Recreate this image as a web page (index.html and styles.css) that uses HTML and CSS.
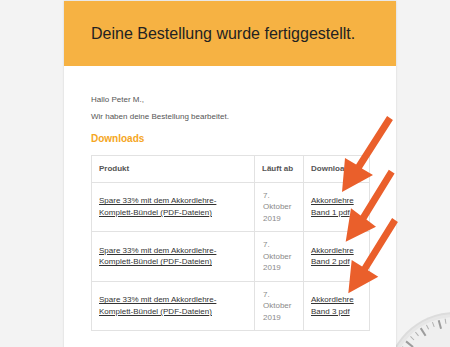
FILE: index.html
```html
<!DOCTYPE html>
<html lang="de">
<head>
<meta charset="utf-8">
<title>Bestellung</title>
<link rel="stylesheet" href="styles.css">
</head>
<body>
<svg class="clock" width="450" height="347" viewBox="0 0 450 347">
  <circle cx="455" cy="381" r="69" fill="#dcdcdc"/>
  <circle cx="455" cy="381" r="67" fill="#e6e6e6"/>
  <circle cx="455" cy="381" r="64" fill="#efefef"/>
  <g transform="translate(455,381)" stroke="#9c9c9c">
    <g stroke-width="2">
      <line x1="0" y1="-63" x2="0" y2="-54" transform="rotate(-15)"/>
      <line x1="0" y1="-63" x2="0" y2="-54" transform="rotate(-33)"/>
      <line x1="0" y1="-63" x2="0" y2="-54" transform="rotate(-51)"/>
      <line x1="0" y1="-63" x2="0" y2="-54" transform="rotate(-69)"/>
    </g>
    <g stroke-width="1" stroke="#b0b0b0">
      <line x1="0" y1="-63" x2="0" y2="-58" transform="rotate(-3)"/>
      <line x1="0" y1="-63" x2="0" y2="-58" transform="rotate(-9)"/>
      <line x1="0" y1="-63" x2="0" y2="-58" transform="rotate(-21)"/>
      <line x1="0" y1="-63" x2="0" y2="-58" transform="rotate(-27)"/>
      <line x1="0" y1="-63" x2="0" y2="-58" transform="rotate(-39)"/>
      <line x1="0" y1="-63" x2="0" y2="-58" transform="rotate(-45)"/>
      <line x1="0" y1="-63" x2="0" y2="-58" transform="rotate(-57)"/>
      <line x1="0" y1="-63" x2="0" y2="-58" transform="rotate(-63)"/>
    </g>
  </g>
</svg>

<div class="card">
  <div class="hero">
    <h1>Deine Bestellung wurde fertiggestellt.</h1>
  </div>
  <div class="content">
    <p class="text">Hallo Peter M.,</p>
    <p class="text second">Wir haben deine Bestellung bearbeitet.</p>
    <h2 class="section">Downloads</h2>
    <table class="downloads">
      <colgroup>
        <col class="c-prod">
        <col class="c-date">
        <col class="c-dl">
      </colgroup>
      <thead>
        <tr><th>Produkt</th><th>Läuft ab</th><th>Download</th></tr>
      </thead>
      <tbody>
        <tr>
          <td><a href="#">Spare 33% mit dem Akkordlehre-<br>Komplett-Bündel (PDF-Dateien)</a></td>
          <td class="date">7.<br>Oktober<br>2019</td>
          <td><a href="#">Akkordlehre<br>Band 1 pdf</a></td>
        </tr>
        <tr>
          <td><a href="#">Spare 33% mit dem Akkordlehre-<br>Komplett-Bündel (PDF-Dateien)</a></td>
          <td class="date">7.<br>Oktober<br>2019</td>
          <td><a href="#">Akkordlehre<br>Band 2 pdf</a></td>
        </tr>
        <tr>
          <td><a href="#">Spare 33% mit dem Akkordlehre-<br>Komplett-Bündel (PDF-Dateien)</a></td>
          <td class="date">7.<br>Oktober<br>2019</td>
          <td><a href="#">Akkordlehre<br>Band 3 pdf</a></td>
        </tr>
      </tbody>
    </table>
  </div>
</div>

<svg class="arrows" width="450" height="347" viewBox="0 0 450 347">
  <g fill="#ea5f2b">
    <polygon points="387.1,116.1 392.9,119.9 361.9,168.4 373,175 342,192 345,158 356.1,164.6"/>
    <polygon points="388.8,169.8 394.6,173.6 366.4,219.4 376,226.7 345.7,241.7 351,208.3 360.6,215.6"/>
    <polygon points="392.1,218.1 397.9,221.9 367.9,270.3 378.3,276.7 348.3,293.3 351.7,260 362.1,266.5"/>
  </g>
</svg>
</body>
</html>
```

FILE: styles.css
```css
html, body {
  margin: 0;
  padding: 0;
}

body {
  background: #f3f3f3;
  font-family: "Liberation Sans", Arial, Helvetica, sans-serif;
  width: 450px;
  height: 347px;
  overflow: hidden;
  position: relative;
}

.clock {
  position: absolute;
  left: 0;
  top: 0;
  z-index: 0;
}

.arrows {
  position: absolute;
  left: 0;
  top: 0;
  z-index: 2;
  pointer-events: none;
}

.card {
  position: relative;
  z-index: 1;
  margin-left: 64px;
  margin-top: 1px;
  width: 332px;
  min-height: 420px;
  background: #ffffff;
  box-shadow: 0 0 2px rgba(0, 0, 0, 0.14);
}

.hero {
  background: #f6b243;
  height: 65px;
  padding: 0 27px;
  display: flex;
  align-items: center;
}

.hero h1 {
  margin: 0 0 -1px;
  font-size: 16px;
  font-weight: normal;
  color: #222222;
}

.content {
  padding: 28px 27px 0;
}

.text {
  margin: 0;
  font-size: 8px;
  line-height: 12px;
  color: #555555;
}

.text.second {
  margin-top: 5px;
}

.section {
  margin: 10px 0 10px;
  font-size: 10px;
  line-height: 12px;
  font-weight: bold;
  color: #f5a623;
}

.downloads {
  width: 278px;
  table-layout: fixed;
  border-collapse: collapse;
  border: 1px solid #e2e2e2;
  font-size: 8px;
  line-height: 11.5px;
}

.c-prod { width: 163px; }
.c-date { width: 49px; }
.c-dl { width: 66px; }

.downloads th,
.downloads td {
  border: 1px solid #e2e2e2;
  padding: 7px 7px;
  text-align: left;
  vertical-align: middle;
}

.downloads th {
  font-weight: bold;
  color: #555555;
}

.downloads td {
  color: #555555;
}

.downloads td.date {
  color: #8a8a8a;
  padding-left: 8px;
}

.downloads a {
  color: #333333;
  text-decoration: underline;
}
```
